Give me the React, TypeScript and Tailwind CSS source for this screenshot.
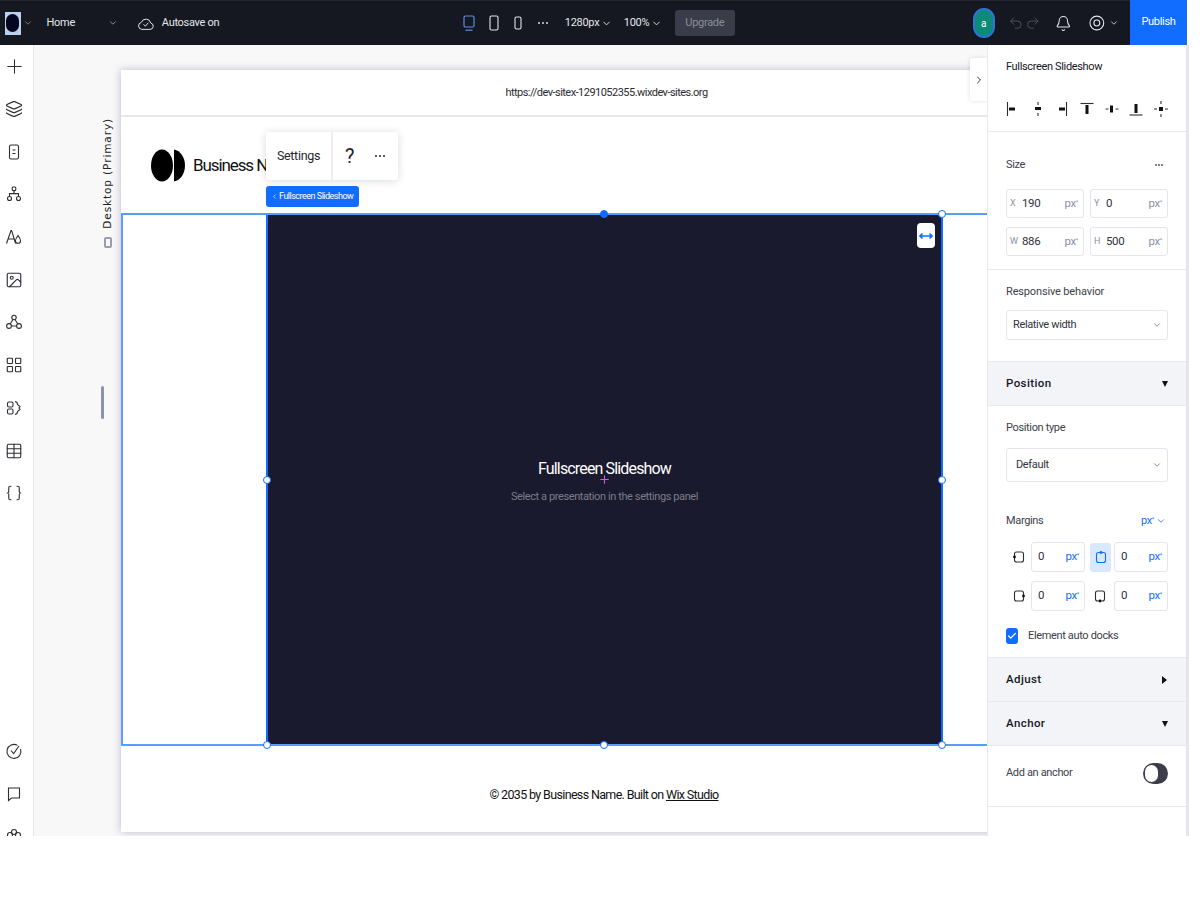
import { Plus, Layers, Image, LayoutGrid, Table, Braces, ChevronDown, ChevronRight, ChevronLeft, Undo2, Redo2, Bell, Check } from "lucide-react"
import type { ReactNode } from "react"

const railIcon = "w-[18px] h-[18px] text-[#2b2e36]"

function Svg({ children, size = 18, className = "" }: { children: ReactNode; size?: number; className?: string }) {
    return (
        <svg width={size} height={size} viewBox="0 0 18 18" fill="none" stroke="currentColor" strokeWidth="1.1" className={className}>
            {children}
        </svg>
    )
}

function RailSlot({ children }: { children: ReactNode }) {
    return <div className="h-[42.7px] shrink-0 flex items-center justify-center">{children}</div>
}

function LeftRail() {
    return (
        <aside className="w-[34px] shrink-0 bg-white border-r border-[#e6e7ec] flex flex-col pr-[5px] overflow-hidden text-[#2b2e36]">
            <RailSlot><Plus className="w-[23px] h-[23px] text-[#2b2e36]" strokeWidth={1.1} /></RailSlot>
            <RailSlot><Layers className={railIcon} strokeWidth={1.5} /></RailSlot>
            <RailSlot>
                <Svg>
                    <rect x="4.5" y="2" width="9" height="14" rx="1.5" />
                    <path d="M7.5 7h3M7.5 10.5h3" />
                </Svg>
            </RailSlot>
            <RailSlot>
                <Svg>
                    <rect x="7.2" y="2" width="3.6" height="3.6" rx="1" />
                    <circle cx="4.5" cy="13.5" r="2" />
                    <circle cx="13.5" cy="13.5" r="2" />
                    <path d="M9 5.6v3M4.5 11.5V8.6h9v2.9" />
                </Svg>
            </RailSlot>
            <RailSlot>
                <Svg>
                    <path d="M1.5 15.5 6 2.5h.6l4 13M3 11h6" />
                    <path d="M13 7.5c1.6 2.2 2.6 3.7 2.6 5.2a2.6 2.6 0 0 1-5.2 0c0-1.5 1-3 2.6-5.2Z" />
                </Svg>
            </RailSlot>
            <RailSlot><Image className={railIcon} strokeWidth={1.5} /></RailSlot>
            <RailSlot>
                <Svg>
                    <circle cx="9" cy="4.5" r="2.2" />
                    <circle cx="4" cy="13" r="2.4" />
                    <circle cx="14" cy="13" r="2.4" />
                    <path d="M8 6.5 5.2 11M10 6.5l2.8 4.5M6.4 13h5.2" />
                </Svg>
            </RailSlot>
            <RailSlot><LayoutGrid className={railIcon} strokeWidth={1.5} /></RailSlot>
            <RailSlot>
                <Svg>
                    <rect x="2.5" y="3" width="5.5" height="5" rx="1.4" />
                    <rect x="2.5" y="10" width="5.5" height="5" rx="1.4" />
                    <path d="m10 2.5 2 1 .5 2 2.5 2-1 1.500 1 1.500-2.500 2-.5 2-2 1" />
                </Svg>
            </RailSlot>
            <RailSlot><Table className={railIcon} strokeWidth={1.5} /></RailSlot>
            <RailSlot><Braces className={railIcon} strokeWidth={1.5} /></RailSlot>
            <div className="flex-1 min-h-[215px]" />
            <RailSlot>
                <Svg>
                    <path d="M15.5 7a7 7 0 1 1-3-3.6" />
                    <path d="m6 8.5 2.6 3L14 4" />
                </Svg>
            </RailSlot>
            <RailSlot>
                <Svg>
                    <path d="M3.500 3h11v10H6.500l-3 2.500Z" />
                </Svg>
            </RailSlot>
            <RailSlot>
                <Svg>
                    <circle cx="9" cy="5" r="2.5" />
                    <circle cx="5" cy="8" r="2.5" />
                    <circle cx="13" cy="8" r="2.5" />
                </Svg>
            </RailSlot>
        </aside>
    )
}

function TopBar() {
    return (
        <header className="w-[1187px] h-[45px] shrink-0 bg-[#151821] text-[#e4e6ec] flex items-center whitespace-nowrap text-[11px] tracking-[-0.3px] border-t border-[#222633]">
            <div className="ml-[5px] w-[16px] h-[23px] bg-[#bcd0ee] flex items-center justify-center">
                <div className="w-[13px] h-[18px] rounded-full bg-[#05051f]" />
            </div>
            <ChevronDown className="ml-[2px] w-[10px] h-[10px] text-[#8d919c]" />
            <span className="ml-[14px] w-[63px]">Home</span>
            <ChevronDown className="w-[10px] h-[10px] text-[#a4a7b1]" />
            <svg width="18" height="18" viewBox="0 0 18 18" fill="none" stroke="currentColor" strokeWidth="1" className="ml-[19px]">
                <path d="M5 15.5a3.6 3.6 0 0 1-.6-7.1 5 5 0 0 1 9.6.6 3.300 3.300 0 0 1-.6 6.500Z" />
                <path d="m6.700 10.300 1.800 2 3-3.600" />
            </svg>
            <span className="ml-[7px] w-[56px]">Autosave on</span>

            <div className="ml-[244px] flex items-center">
                <svg width="14" height="18" viewBox="0 0 14 18" fill="none" stroke="#5b8fdc" strokeWidth="1.2">
                    <rect x="2" y="2" width="10" height="11" rx="1.5" />
                    <path d="M3.5 16.2h7" />
                </svg>
                <svg width="12" height="18" viewBox="0 0 12 18" fill="none" stroke="currentColor" strokeWidth="1.1" className="ml-[12px]">
                    <rect x="2" y="2" width="8" height="14" rx="1.5" />
                </svg>
                <svg width="10" height="18" viewBox="0 0 10 18" fill="none" stroke="currentColor" strokeWidth="1.1" className="ml-[13px]">
                    <rect x="2" y="3" width="6" height="12" rx="1.5" />
                </svg>
                <span className="ml-[15px] w-[10px] flex gap-[2px]">
                    <i className="w-[2px] h-[2px] rounded-full bg-[#d8dae0]" />
                    <i className="w-[2px] h-[2px] rounded-full bg-[#d8dae0]" />
                    <i className="w-[2px] h-[2px] rounded-full bg-[#d8dae0]" />
                </span>
                <span className="ml-[17px] w-[34px]">1280px</span>
                <ChevronDown className="w-[11px] h-[11px] ml-[2px]" />
                <span className="ml-[12px] w-[25px]">100%</span>
                <ChevronDown className="w-[11px] h-[11px] ml-[2px]" />
                <div className="ml-[13px] w-[60px] h-[26px] rounded-[3px] bg-[#3a3d49] text-[#8a8d99] flex items-center justify-center">Upgrade</div>
            </div>

            <div className="ml-[238px] w-[22px] h-[30px] rounded-full bg-[#0d8a78] border-2 border-[#2f73d8] flex items-center justify-center text-[10px] text-white">a</div>
            <Undo2 className="ml-[13px] w-[16px] h-[16px] text-[#4d515c]" strokeWidth={1.5} />
            <Redo2 className="ml-[2px] w-[16px] h-[16px] text-[#4d515c]" strokeWidth={1.5} />
            <Bell className="ml-[14px] w-[17px] h-[17px]" strokeWidth={1.5} />
            <svg width="18" height="18" viewBox="0 0 18 18" fill="none" stroke="currentColor" strokeWidth="1.1" className="ml-[16px]">
                <circle cx="9" cy="9" r="7" />
                <circle cx="9" cy="9" r="3" />
            </svg>
            <ChevronDown className="w-[10px] h-[10px] ml-[4px]" />
            <div className="ml-[11px] w-[58px] self-stretch -mt-px bg-[#116dff] text-white flex items-center justify-center">Publish</div>
        </header>
    )
}

function AlignIcon({ kind }: { kind: number }) {
    const shapes: Record<number, ReactNode> = {
        0: <><path d="M3.500 2v14" /><rect x="5" y="7.500" width="6" height="3" fill="#111" stroke="none" /></>,
        1: <><path d="M9 2v3M9 13v3" /><rect x="6" y="7" width="6" height="3" fill="#111" stroke="none" /></>,
        2: <><path d="M13.500 2v14" /><rect x="6" y="7.500" width="6" height="3" fill="#111" stroke="none" /></>,
        3: <><path d="M2.500 3.500h13" /><rect x="7.500" y="5" width="3" height="9" fill="#111" stroke="none" /></>,
        4: <><path d="M2.500 9h3M12.500 9h3" /><rect x="7" y="5.500" width="3" height="7" fill="#111" stroke="none" /></>,
        5: <><path d="M2.500 15h13" /><rect x="7.500" y="4" width="3" height="9" fill="#111" stroke="none" /></>,
        6: <><path d="M9 1v3M9 14v3M2 9h3M13 9h3" /><rect x="7" y="7" width="4" height="4" fill="#111" stroke="none" /></>,
    }
    return <Svg className="text-[#2b2e36]">{shapes[kind]}</Svg>
}

function Px({ className }: { className: string }) {
    return <span className={className}>px<sup className="text-[6px]">*</sup></span>
}

function SizeField({ axis, value }: { axis: string; value: string }) {
    return (
        <div className="h-[29px] rounded-[3px] border border-[#e3e5ec] flex items-center pl-[3px] pr-[5px] text-[11.500px]">
            <span className="w-[12px] text-[9px] text-[#8b8fa8]">{axis}</span>
            <span className="flex-1 text-[#30333c]">{value}</span>
            <Px className="text-[#8b8fa8]" />
        </div>
    )
}

function MarginField() {
    return (
        <div className="h-[30px] rounded-[3px] border border-[#e3e5ec] flex items-center justify-between pl-[6px] pr-[5px] text-[11.500px]">
            <span className="text-[#30333c]">0</span>
            <Px className="text-[#116dff]" />
        </div>
    )
}

function MarginIcon({ dot }: { dot: [number, number] }) {
    return (
        <svg width="14" height="14" viewBox="0 0 14 14" fill="none" stroke="#2b2e36" strokeWidth="1.1">
            <rect x="2.500" y="2" width="9" height="10" rx="2" />
            <circle cx={dot[0]} cy={dot[1]} r="1.400" fill="#111" stroke="none" />
        </svg>
    )
}

function AccordionHead({ label, open }: { label: string; open: boolean }) {
    return (
        <div className="h-[44px] bg-[#f3f4f8] border-b border-[#e8e9ef] flex items-center justify-between pl-[18px] pr-[18px]">
            <span className="text-[11.500px] font-medium tracking-[0.4px] text-[#15171e]">{label}</span>
            {open ? (
                <span className="w-0 h-0 border-x-[3px] border-x-transparent border-t-[6px] border-t-[#111]" />
            ) : (
                <span className="w-0 h-0 border-y-[4px] border-y-transparent border-l-[5px] border-l-[#111] mr-[1px]" />
            )}
        </div>
    )
}

function Dropdown({ label, height, pad }: { label: string; height: string; pad: string }) {
    return (
        <div className={`${height} ${pad} rounded-[3px] border border-[#e3e5ec] flex items-center justify-between pr-[5px] text-[#30333c]`}>
            <span>{label}</span>
            <ChevronDown className="w-[10px] h-[10px] text-[#6f7380]" />
        </div>
    )
}

function Inspector() {
    return (
        <aside className="w-[202px] shrink-0 bg-white border-l border-[#e8e9ef] border-r-[3px] border-r-[#e4e5ed] z-10 text-[11px] tracking-[-0.35px] text-[#3c3f49]">
            <section className="h-[87px] border-b border-[#e8e9ef] px-[18px] pt-[15px]">
                <h2 className="text-[#15171e] leading-[14px]">Fullscreen Slideshow</h2>
                <div className="mt-[26px] flex justify-between -ml-[2px] w-[166px]">
                    {[0, 1, 2, 3, 4, 5, 6].map((k) => <AlignIcon key={k} kind={k} />)}
                </div>
            </section>
            <section className="h-[138px] border-b border-[#e8e9ef] px-[18px] pt-[26px]">
                <div className="flex justify-between items-center leading-[14px]">
                    <span>Size</span>
                    <span className="flex gap-[1px] mr-[5px]">
                        <i className="w-[2px] h-[2px] rounded-full bg-[#555]" />
                        <i className="w-[2px] h-[2px] rounded-full bg-[#555]" />
                        <i className="w-[2px] h-[2px] rounded-full bg-[#555]" />
                    </span>
                </div>
                <div className="mt-[17px] grid grid-cols-2 gap-x-[6px] gap-y-[9px]">
                    <SizeField axis="X" value="190" />
                    <SizeField axis="Y" value="0" />
                    <SizeField axis="W" value="886" />
                    <SizeField axis="H" value="500" />
                </div>
            </section>
            <section className="h-[92px] px-[18px] pt-[15px] border-b border-[#e8e9ef]">
                <p className="leading-[14px] tracking-[-0.15px]">Responsive behavior</p>
                <div className="mt-[11px]"><Dropdown label="Relative width" height="h-[30px]" pad="pl-[6px]" /></div>
            </section>
            <AccordionHead label="Position" open />
            <section className="h-[252px] px-[18px] pt-[15px] border-b border-[#e8e9ef]">
                <p className="leading-[14px]">Position type</p>
                <div className="mt-[13px]"><Dropdown label="Default" height="h-[34px]" pad="pl-[9px]" /></div>
                <div className="mt-[32px] flex justify-between items-center leading-[14px]">
                    <span>Margins</span>
                    <span className="flex items-center text-[#116dff] gap-[2px] mr-[2px]"><Px className="" /><ChevronDown className="w-[10px] h-[10px]" /></span>
                </div>
                <div className="mt-[14px] grid grid-cols-[25px_54px_29px_54px] items-center gap-y-[9px] w-[162px]">
                    <div className="flex justify-center"><MarginIcon dot={[2.500, 7]} /></div>
                    <MarginField />
                    <div className="w-[21px] h-[29px] rounded-[3px] bg-[#d9e8ff] flex items-center justify-center ml-[5px]">
                        <svg width="14" height="14" viewBox="0 0 14 14" fill="none" stroke="#116dff" strokeWidth="1.100">
                            <rect x="2.500" y="2.500" width="9" height="10" rx="2" />
                            <circle cx="7" cy="2.500" r="1.400" fill="#116dff" stroke="none" />
                        </svg>
                    </div>
                    <MarginField />
                    <div className="flex justify-center"><MarginIcon dot={[11.500, 7]} /></div>
                    <MarginField />
                    <div className="flex justify-center"><MarginIcon dot={[7, 12]} /></div>
                    <MarginField />
                </div>
                <label className="mt-[17px] flex items-center gap-[10px]">
                    <span className="w-[12px] h-[16px] rounded-[3px] bg-[#116dff] flex items-center justify-center">
                        <Check className="w-[10px] h-[10px] text-white" strokeWidth={3} />
                    </span>
                    <span>Element auto docks</span>
                </label>
            </section>
            <AccordionHead label="Adjust" open={false} />
            <AccordionHead label="Anchor" open />
            <section className="h-[61px] px-[18px] pb-[5px] border-b border-[#e8e9ef] flex items-center justify-between">
                <span>Add an anchor</span>
                <span className="w-[25px] h-[21px] rounded-full bg-[#3b3e48] flex items-center pl-[2px]">
                    <i className="w-[13px] h-[17px] rounded-full bg-white" />
                </span>
            </section>
        </aside>
    )
}

function Handle({ className }: { className: string }) {
    return <span className={`absolute w-[8px] h-[8px] rounded-full border-[1.500px] border-[#116dff] -translate-x-1/2 -translate-y-1/2 ${className}`} />
}

function Canvas() {
    return (
        <main className="flex-1 min-w-0 relative overflow-hidden bg-[#f8f8f9] flex">
            <div className="w-[87px] shrink-0 relative">
                <div className="absolute left-[66px] top-[73px] flex flex-col items-center gap-[8px]">
                    <span className="[writing-mode:vertical-rl] rotate-180 text-[10.500px] tracking-[0.9px] text-[#222] [font-family:'DejaVu_Sans',sans-serif]">Desktop (Primary)</span>
                    <span className="w-[8px] h-[11px] rounded-[2px] border-2 border-[#9a9db0]" />
                </div>
                <div className="absolute left-[67px] top-[341px] w-[3px] h-[33px] rounded-full bg-[#8e90b0]" />
            </div>
            <div className="mt-[25px] w-[966px] h-[762px] shrink-0 bg-white shadow-[0_0_8px_rgba(90,95,130,0.4)] flex flex-col">
                <div className="h-[47px] shrink-0 border-b-2 border-[#e8e8ec] flex items-center justify-center text-[11px] tracking-[-0.53px] text-[#2c2c30] pl-[5px] pt-[2px]">
                    https://dev-sitex-1291052355.wixdev-sites.org
                </div>
                <div className="h-[96px] shrink-0 flex items-center pl-[30px] pt-[1px]">
                    <svg width="35" height="33" viewBox="0 0 35 33" fill="#000">
                        <ellipse cx="11" cy="16.500" rx="11" ry="16" />
                        <path d="M23 .5c6.500 1 11 8 11 16s-4.500 15-11 16Z" />
                    </svg>
                    <span className="ml-[7px] whitespace-nowrap text-[17px] tracking-[-1.1px] text-[#111]">Business Na</span>
                </div>
                <div className="relative h-[533px] shrink-0 border-y-2 border-l-2 border-[#5a9bff] pl-[143px] flex">
                    <div className="w-[677px] bg-[#1a1a2e] border-x-2 border-[#116dff] flex flex-col items-center justify-center text-center relative pt-[3px]">
                        <h1 className="text-[16px] text-white tracking-[-0.85px] leading-[22px]">Fullscreen Slideshow</h1>
                        <p className="mt-[9px] text-[11px] text-[#7c7c88] tracking-[-0.4px] leading-[16px]">Select a presentation in the settings panel</p>
                        <Plus className="absolute left-[330px] top-[258px] w-[13px] h-[13px] text-[#d45ad4]" strokeWidth={2} />
                        <button className="absolute right-[6px] top-[8px] w-[18px] h-[25px] rounded-[4px] bg-white flex items-center justify-center">
                            <svg width="14" height="8" viewBox="0 0 14 8" fill="none" stroke="#116dff" strokeWidth="1.600">
                                <path d="M1 4h12M3.500 1.500 1 4l2.500 2.500M10.500 1.500 13 4l-2.500 2.500" />
                            </svg>
                        </button>
                    </div>
                    <Handle className="left-[481px] top-[-1px] bg-[#116dff]" />
                    <Handle className="left-[144px] top-[265px] bg-white" />
                    <Handle className="left-[819px] top-[265px] bg-white" />
                    <Handle className="left-[819px] top-[-1px] bg-white" />
                    <Handle className="left-[144px] top-[530px] bg-white" />
                    <Handle className="left-[481px] top-[530px] bg-white" />
                    <Handle className="left-[819px] top-[530px] bg-white" />
                </div>
                <div className="flex-1 flex items-center justify-center text-[12.500px] tracking-[-0.65px] text-[#111] pt-[12px]">
                    <span>© 2035 by Business Name. Built on <u>Wix Studio</u></span>
                </div>
            </div>

            <div className="absolute left-[232px] top-[87px] h-[48px] w-[132px] rounded-[3px] bg-white shadow-[0_1px_8px_rgba(40,50,90,0.18)] flex items-center text-[#23252c]">
                <span className="w-[67px] h-full border-r-2 border-[#eeeef2] flex items-center justify-center text-[12.500px] tracking-[-0.3px]">Settings</span>
                <span className="ml-[12px] text-[20px] leading-none">?</span>
                <span className="ml-[21px] flex gap-[2px]">
                    <i className="w-[2px] h-[2px] rounded-full bg-[#23252c]" />
                    <i className="w-[2px] h-[2px] rounded-full bg-[#23252c]" />
                    <i className="w-[2px] h-[2px] rounded-full bg-[#23252c]" />
                </span>
            </div>
            <div className="absolute left-[232px] top-[141px] h-[21px] w-[93px] rounded-[3px] bg-[#116dff] flex items-center pl-[5px] gap-[1px] whitespace-nowrap text-white text-[9px] tracking-[-0.5px]">
                <ChevronLeft className="w-[7px] h-[9px]" />
                <span>Fullscreen Slideshow</span>
            </div>
            <div className="absolute right-0 top-[13px] w-[17px] h-[43px] rounded-l-[3px] bg-white shadow-[0_0_4px_rgba(40,50,90,0.15)] flex items-center justify-center">
                <ChevronRight className="w-[12px] h-[12px] text-[#333]" />
            </div>
        </main>
    )
}

export default function App() {
    return (
        <div className="w-[1189px] h-[836px] flex flex-col overflow-hidden bg-white [font-family:Roboto,sans-serif]">
            <TopBar />
            <div className="flex-1 min-h-0 flex">
                <LeftRail />
                <Canvas />
                <Inspector />
            </div>
        </div>
    )
}
